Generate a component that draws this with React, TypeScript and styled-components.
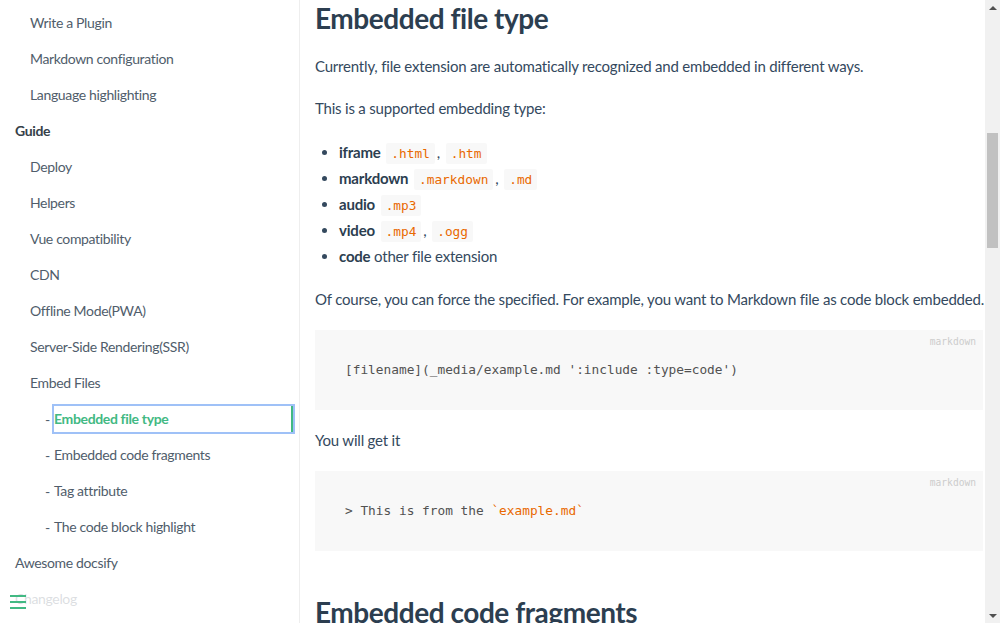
import React from "react";
import styled, { createGlobalStyle } from "styled-components";

const Global = createGlobalStyle`
  html, body { margin: 0; padding: 0; }
  body {
    font-family: "Lato", "Liberation Sans", sans-serif;
    color: #34495e;
    background: #fff;
    -webkit-font-smoothing: antialiased;
  }
  * { box-sizing: border-box; }
`;

const Page = styled.div`
  display: flex;
  width: 1000px;
  height: 623px;
  overflow: hidden;
`;

const Sidebar = styled.aside`
  position: relative;
  width: 300px;
  flex: none;
  border-right: 1px solid #eeeeee;
  padding: 5px 6px 0 0;
  overflow: hidden;
`;

const NavList = styled.ul`
  list-style: none;
  margin: 0;
  padding: 0;
`;

const NavRow = styled.li<{ $indent: number }>`
  display: flex;
  align-items: center;
  height: 36px;
  padding-left: ${(p) => p.$indent}px;
  font-size: 14px;
  letter-spacing: -0.35px;
  color: #505d6b;
`;

const Dash = styled.span`
  width: 9px;
  flex: none;
`;

const NavLink = styled.a<{ $active?: boolean; $bold?: boolean }>`
  display: block;
  flex: 1;
  line-height: 26px;
  color: ${(p) => (p.$active ? "#42b983" : p.$bold ? "#364149" : "#505d6b")};
  font-weight: ${(p) => (p.$active || p.$bold ? 700 : 400)};
  text-decoration: none;
  white-space: nowrap;
  border-right: ${(p) => (p.$active ? "2px solid #42b983" : "none")};
  outline: ${(p) => (p.$active ? "2px solid #9fc1f7" : "none")};
`;

const Toggle = styled.div`
  position: absolute;
  left: 0;
  bottom: 0;
  width: 284px;
  padding: 10px;
  background: rgba(255, 255, 255, 0.8);
`;

const Bar = styled.span`
  display: block;
  width: 16px;
  height: 2px;
  margin-bottom: 4px;
  background: #42b983;
`;

const Main = styled.main`
  flex: 1;
  min-width: 0;
  overflow: hidden;
  padding: 0 2px 0 15px;
`;

const H2 = styled.h2<{ $top?: number }>`
  margin: ${(p) => p.$top ?? 0}px 0 0;
  font-size: 28px;
  line-height: 36px;
  font-weight: 700;
  letter-spacing: -0.45px;
  color: #2c3e50;
  white-space: nowrap;
`;

const P = styled.p`
  margin: 18px 0 0;
  font-size: 15px;
  line-height: 24px;
  letter-spacing: -0.2px;
  white-space: nowrap;
`;

const List = styled.ul`
  margin: 19px 0 0;
  padding-left: 24px;
  font-size: 15px;
  letter-spacing: -0.2px;
`;

const Item = styled.li`
  line-height: 26px;
  height: 26px;
`;

const Strong = styled.strong`
  color: #2c3e50;
  font-weight: 700;
`;

const Code = styled.code`
  font-family: "DejaVu Sans Mono", monospace;
  font-size: 12.8px;
  letter-spacing: 0;
  color: #e96900;
  background: #f8f8f8;
  border-radius: 2px;
  padding: 3px 5px;
  margin: 0 2px;
`;

const Pre = styled.pre`
  position: relative;
  margin: 19px 0 1px;
  padding: 0 25px;
  background: #f8f8f8;
  font-family: "DejaVu Sans Mono", monospace;
  &::after {
    content: attr(data-lang);
    position: absolute;
    right: 0;
    top: 0;
    padding: 6px 7px;
    font-size: 9.6px;
    line-height: 12px;
    color: #cccccc;
  }
`;

const PreCode = styled.code`
  display: block;
  padding: 28px 5px;
  font-size: 12.8px;
  line-height: 24px;
  color: #525252;
  white-space: pre;
`;

const Tok = styled.span`
  color: #e96900;
`;

const Scrollbar = styled.div`
  width: 15px;
  flex: none;
  background: #f1f1f1;
  display: flex;
  flex-direction: column;
  align-items: center;
`;

const Arrow = styled.div<{ $down?: boolean }>`
  height: 15px;
  width: 15px;
  flex: none;
  display: flex;
  align-items: center;
  justify-content: center;
  &::before {
    content: "";
    width: 0;
    height: 0;
    border-left: 4px solid transparent;
    border-right: 4px solid transparent;
    ${(p) =>
      p.$down ? "border-top: 4px solid #505050;" : "border-bottom: 4px solid #505050;"}
  }
`;

const Track = styled.div`
  flex: 1;
  width: 100%;
  display: flex;
  flex-direction: column;
  align-items: center;
  padding-top: 118px;
`;

const Thumb = styled.div`
  width: 11px;
  height: 115px;
  background: #c1c1c1;
`;

type NavItem = { text: string; indent: number; sub?: boolean; active?: boolean; bold?: boolean };

const nav: NavItem[] = [
  { text: "Write a Plugin", indent: 30 },
  { text: "Markdown configuration", indent: 30 },
  { text: "Language highlighting", indent: 30 },
  { text: "Guide", indent: 15, bold: true },
  { text: "Deploy", indent: 30 },
  { text: "Helpers", indent: 30 },
  { text: "Vue compatibility", indent: 30 },
  { text: "CDN", indent: 30 },
  { text: "Offline Mode(PWA)", indent: 30 },
  { text: "Server-Side Rendering(SSR)", indent: 30 },
  { text: "Embed Files", indent: 30 },
  { text: "Embedded file type", indent: 45, sub: true, active: true },
  { text: "Embedded code fragments", indent: 45, sub: true },
  { text: "Tag attribute", indent: 45, sub: true },
  { text: "The code block highlight", indent: 45, sub: true },
  { text: "Awesome docsify", indent: 15 },
  { text: "Changelog", indent: 15 },
];

export default function App() {
  return (
    <>
      <Global />
      <Page>
        <Sidebar>
          <NavList>
            {nav.map((n) => (
              <NavRow key={n.text} $indent={n.indent}>
                {n.sub && <Dash>-</Dash>}
                <NavLink href="#" $active={n.active} $bold={n.bold}>
                  {n.text}
                </NavLink>
              </NavRow>
            ))}
          </NavList>
          <Toggle>
            <Bar />
            <Bar />
            <Bar />
          </Toggle>
        </Sidebar>
        <Main>
          <H2>Embedded file type</H2>
          <P>Currently, file extension are automatically recognized and embedded in different ways.</P>
          <P>This is a supported embedding type:</P>
          <List>
            <Item>
              <Strong>iframe</Strong> <Code>.html</Code>, <Code>.htm</Code>
            </Item>
            <Item>
              <Strong>markdown</Strong> <Code>.markdown</Code>, <Code>.md</Code>
            </Item>
            <Item>
              <Strong>audio</Strong> <Code>.mp3</Code>
            </Item>
            <Item>
              <Strong>video</Strong> <Code>.mp4</Code>, <Code>.ogg</Code>
            </Item>
            <Item>
              <Strong>code</Strong> other file extension
            </Item>
          </List>
          <P>Of course, you can force the specified. For example, you want to Markdown file as code block embedded.</P>
          <Pre data-lang="markdown">
            <PreCode>[filename](_media/example.md ':include :type=code')</PreCode>
          </Pre>
          <P>You will get it</P>
          <Pre data-lang="markdown">
            <PreCode>
              {"> This is from the "}
              <Tok>`example.md`</Tok>
            </PreCode>
          </Pre>
          <H2 $top={43}>Embedded code fragments</H2>
        </Main>
        <Scrollbar>
          <Arrow />
          <Track>
            <Thumb />
          </Track>
          <Arrow $down />
        </Scrollbar>
      </Page>
    </>
  );
}
